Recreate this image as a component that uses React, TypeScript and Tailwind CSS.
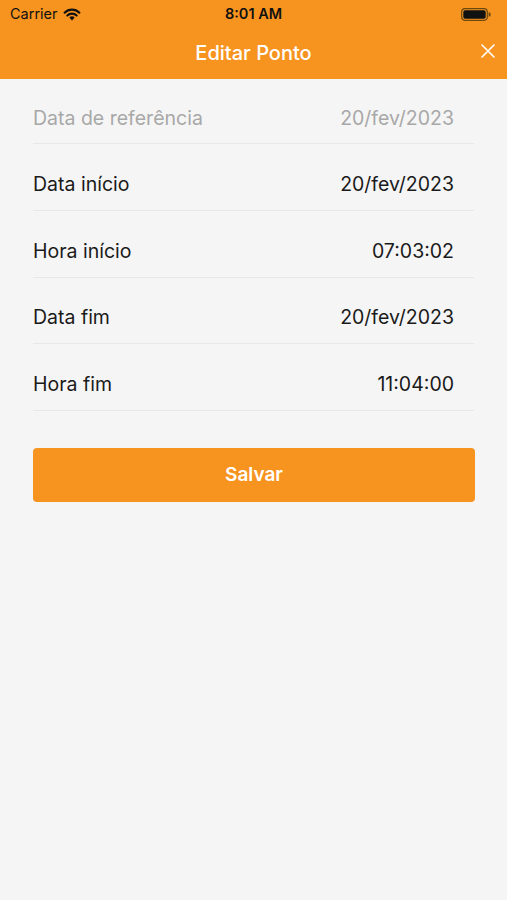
import React from "react";

const rows = [
  { label: "Data de referência", value: "20/fev/2023", muted: true },
  { label: "Data início", value: "20/fev/2023" },
  { label: "Hora início", value: "07:03:02" },
  { label: "Data fim", value: "20/fev/2023" },
  { label: "Hora fim", value: "11:04:00" },
];

export default function App() {
  return (
    <div
      className="w-[507px] h-[900px] bg-[#f5f5f5] flex flex-col"
      style={{ fontFamily: "Inter, 'Liberation Sans', sans-serif" }}
    >
      <div className="bg-[#f7941f] h-[79px] flex flex-col">
        <div className="h-[28px] flex items-center justify-between px-[10px] text-[#111]">
          <div className="flex items-center gap-[5px] w-[120px]">
            <span className="text-[14.5px]">Carrier</span>
            <svg width="18" height="13" viewBox="0 0 18 13">
              <path d="M9 12.5 L6.3 9.6 A3.8 3.8 0 0 1 11.7 9.6 Z" fill="#111" />
              <path d="M4.3 7.6 A6.7 6.7 0 0 1 13.7 7.6" stroke="#111" strokeWidth="2.1" fill="none" strokeLinecap="round" />
              <path d="M1.6 4.7 A10.4 10.4 0 0 1 16.4 4.7" stroke="#111" strokeWidth="2.1" fill="none" strokeLinecap="round" />
            </svg>
          </div>
          <span className="text-[14.5px] font-semibold">8:01 AM</span>
          <div className="w-[120px] flex justify-end pr-[6px]">
            <svg width="30" height="13" viewBox="0 0 30 13">
              <rect x="0.7" y="0.7" width="25.6" height="11.6" rx="3.2" fill="none" stroke="#6b4a12" strokeWidth="1.2" />
              <rect x="2.3" y="2.3" width="22.4" height="8.4" rx="1.8" fill="#111" />
              <path d="M27.6 4.3 v4.4 a2 2 0 0 0 0 -4.4 z" fill="#6b4a12" />
            </svg>
          </div>
        </div>
        <div className="flex-1 relative flex items-center justify-center">
          <span className="text-white text-[20px] font-medium -mt-[2px]">Editar Ponto</span>
          <svg className="absolute right-[12px] top-[16px]" width="14" height="14" viewBox="0 0 14 14">
            <path d="M1 1 L13 13 M13 1 L1 13" stroke="#fff" strokeWidth="1.6" strokeLinecap="round" />
          </svg>
        </div>
      </div>

      <div className="px-[33px] flex flex-col">
        <div className="h-[65px] flex items-center justify-between pr-[20px] pt-[15px] border-b border-[#e8e8e8] text-[19.5px] text-[#a8a8a8]">
          <span>{rows[0].label}</span>
          <span>{rows[0].value}</span>
        </div>
        {rows.slice(1).map((r) => (
          <div
            key={r.label}
            className="h-[66.75px] flex items-center justify-between pr-[20px] pt-[15px] border-b border-[#e8e8e8] text-[19.5px] text-[#1a1a1a]"
          >
            <span>{r.label}</span>
            <span>{r.value}</span>
          </div>
        ))}
        <button className="mt-[37px] h-[54px] w-[442px] rounded-[4px] bg-[#f7941f] text-white text-[19px] font-semibold">
          Salvar
        </button>
      </div>
    </div>
  );
}
